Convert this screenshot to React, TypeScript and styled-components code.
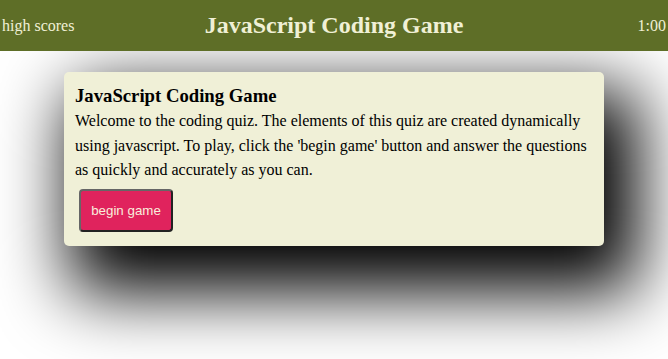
import React from "react";
import styled, { createGlobalStyle } from "styled-components";

const Global = createGlobalStyle`
  html, body { margin: 0; padding: 0; background: #ffffff; height: 100%; }
  body { font-family: "Liberation Serif", "Times New Roman", serif; }
  #root { min-height: 100%; }
`;

const Page = styled.div`
  min-height: 359px;
  display: flex;
  flex-direction: column;
`;

const Header = styled.header`
  height: 51px;
  background: #5e6e27;
  color: #f0f0d6;
  display: flex;
  align-items: center;
  justify-content: space-between;
  padding: 0 2px;
  box-sizing: border-box;
  position: relative;
  z-index: 1;
`;

const Side = styled.span<{ $align: string }>`
  font-size: 16px;
  width: 90px;
  text-align: ${(p) => p.$align};
`;

const Title = styled.h1`
  margin: 0;
  font-size: 24px;
  font-weight: bold;
`;

const Main = styled.main`
  flex: 1;
  display: flex;
  justify-content: center;
  align-items: flex-start;
  padding-top: 21px;
`;

const Card = styled.section`
  width: 540px;
  box-sizing: border-box;
  background: #f0f0d7;
  border-radius: 5px;
  padding: 12px 11px 14px 11px;
  box-shadow: 20px 32px 70px 14px #000;
`;

const CardTitle = styled.h2`
  margin: 0 0 1px;
  font-size: 18.72px;
  font-weight: bold;
  line-height: 24px;
  color: #000;
`;

const Text = styled.p`
  margin: 0;
  font-size: 16px;
  line-height: 24.5px;
  color: #000;
`;

const Button = styled.button`
  margin: 6px 0 0 4px;
  width: 94px;
  height: 43px;
  background: #e0235d;
  color: #f9eedc;
  border: 2px solid;
  border-color: #666 #222 #222 #666;
  border-radius: 4px;
  font-family: "Liberation Sans", Arial, sans-serif;
  font-size: 13.33px;
  cursor: pointer;
`;

export default function App() {
  return (
    <Page>
      <Global />
      <Header>
        <Side $align="left">high scores</Side>
        <Title>JavaScript Coding Game</Title>
        <Side $align="right">1:00</Side>
      </Header>
      <Main>
        <Card>
          <CardTitle>JavaScript Coding Game</CardTitle>
          <Text>
            Welcome to the coding quiz. The elements of this quiz are created dynamically using
            javascript. To play, click the 'begin game' button and answer the questions as quickly
            and accurately as you can.
          </Text>
          <Button>begin game</Button>
        </Card>
      </Main>
    </Page>
  );
}
